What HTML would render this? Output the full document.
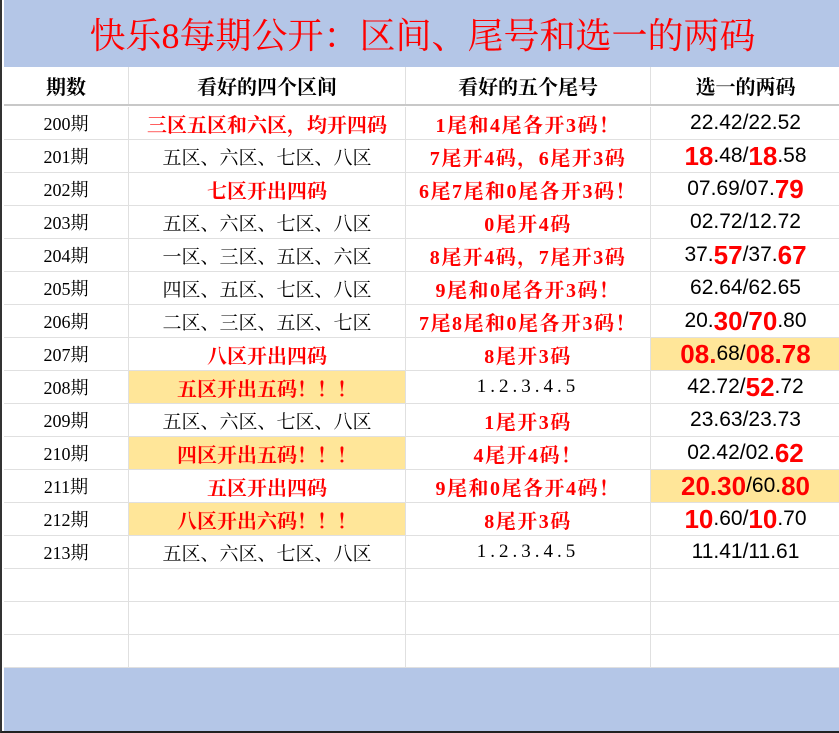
<!DOCTYPE html>
<html><head><meta charset="utf-8"><style>
*{margin:0;padding:0;box-sizing:border-box}
body{width:839px;height:733px;background:#fff;position:relative;overflow:hidden;font-family:"Liberation Serif","Noto Serif CJK SC",serif}
#wrap{position:absolute;left:0;top:0;width:839px;height:733px;border-left:2px solid #333;border-bottom:2px solid #222;}
#title{position:absolute;left:2px;top:0;width:837px;height:67px;background:#b4c6e7;color:#f00;font-size:36px;text-align:center;line-height:72px}
.row{position:absolute;left:2px;width:837px;height:33px;display:flex;border-bottom:1px solid #e0e0e0}
.row div{height:100%;display:flex;align-items:center;justify-content:center;white-space:nowrap;overflow:hidden;font-size:19px;border-right:1px solid #e0e0e0}
.c1{width:125px}.c2{width:277px}.c3{width:245px}.c4{width:190px}
.h{top:67px;height:39px;border-bottom:2px solid #c8c8c8}
.h div{font-weight:bold;font-size:20px !important}
.row div.r{color:#f00;font-weight:bold;font-size:20px}
.row div.r3{letter-spacing:1.5px}
.row div.y{background:#ffe699}
.row div.n{font-family:"Liberation Sans",sans-serif;font-size:21px}
.n b{color:#f00;font-size:26px;line-height:1}
.row div.s{font-size:18px}
.row div.d{letter-spacing:4px;font-size:19px}
#foot{position:absolute;left:2px;top:668px;width:837px;height:63px;background:#b4c6e7}
</style></head><body><div id="wrap">
<div id="title">快乐8每期公开：区间、尾号和选一的两码</div>
<div class="row h"><div class="c1">期数</div><div class="c2">看好的四个区间</div><div class="c3">看好的五个尾号</div><div class="c4">选一的两码</div></div>
<div class="row" style="top:107px"><div class="c1 s">200期</div><div class="c2 r">三区五区和六区，均开四码</div><div class="c3 r r3">1尾和4尾各开3码！</div><div class="c4 n">22.42/22.52</div></div>
<div class="row" style="top:140px"><div class="c1 s">201期</div><div class="c2">五区、六区、七区、八区</div><div class="c3 r r3">7尾开4码，6尾开3码</div><div class="c4 n"><b>18</b>.48/<b>18</b>.58</div></div>
<div class="row" style="top:173px"><div class="c1 s">202期</div><div class="c2 r">七区开出四码</div><div class="c3 r r3">6尾7尾和0尾各开3码！</div><div class="c4 n">07.69/07.<b>79</b></div></div>
<div class="row" style="top:206px"><div class="c1 s">203期</div><div class="c2">五区、六区、七区、八区</div><div class="c3 r r3">0尾开4码</div><div class="c4 n">02.72/12.72</div></div>
<div class="row" style="top:239px"><div class="c1 s">204期</div><div class="c2">一区、三区、五区、六区</div><div class="c3 r r3">8尾开4码，7尾开3码</div><div class="c4 n">37.<b>57</b>/37.<b>67</b></div></div>
<div class="row" style="top:272px"><div class="c1 s">205期</div><div class="c2">四区、五区、七区、八区</div><div class="c3 r r3">9尾和0尾各开3码！</div><div class="c4 n">62.64/62.65</div></div>
<div class="row" style="top:305px"><div class="c1 s">206期</div><div class="c2">二区、三区、五区、七区</div><div class="c3 r r3">7尾8尾和0尾各开3码！</div><div class="c4 n">20.<b>30</b>/<b>70</b>.80</div></div>
<div class="row" style="top:338px"><div class="c1 s">207期</div><div class="c2 r">八区开出四码</div><div class="c3 r r3">8尾开3码</div><div class="c4 n y"><b>08.</b>68/<b>08.78</b></div></div>
<div class="row" style="top:371px"><div class="c1 s">208期</div><div class="c2 r y">五区开出五码！！！</div><div class="c3 d">1.2.3.4.5</div><div class="c4 n">42.72/<b>52</b>.72</div></div>
<div class="row" style="top:404px"><div class="c1 s">209期</div><div class="c2">五区、六区、七区、八区</div><div class="c3 r r3">1尾开3码</div><div class="c4 n">23.63/23.73</div></div>
<div class="row" style="top:437px"><div class="c1 s">210期</div><div class="c2 r y">四区开出五码！！！</div><div class="c3 r r3">4尾开4码！</div><div class="c4 n">02.42/02.<b>62</b></div></div>
<div class="row" style="top:470px"><div class="c1 s">211期</div><div class="c2 r">五区开出四码</div><div class="c3 r r3">9尾和0尾各开4码！</div><div class="c4 n y"><b>20.30</b>/60.<b>80</b></div></div>
<div class="row" style="top:503px"><div class="c1 s">212期</div><div class="c2 r y">八区开出六码！！！</div><div class="c3 r r3">8尾开3码</div><div class="c4 n"><b>10</b>.60/<b>10</b>.70</div></div>
<div class="row" style="top:536px"><div class="c1 s">213期</div><div class="c2">五区、六区、七区、八区</div><div class="c3 d">1.2.3.4.5</div><div class="c4 n">11.41/11.61</div></div>
<div class="row" style="top:569px"><div class="c1"></div><div class="c2"></div><div class="c3"></div><div class="c4"></div></div>
<div class="row" style="top:602px"><div class="c1"></div><div class="c2"></div><div class="c3"></div><div class="c4"></div></div>
<div class="row" style="top:635px"><div class="c1"></div><div class="c2"></div><div class="c3"></div><div class="c4"></div></div>
<div id="foot"></div>
</div></body></html>
